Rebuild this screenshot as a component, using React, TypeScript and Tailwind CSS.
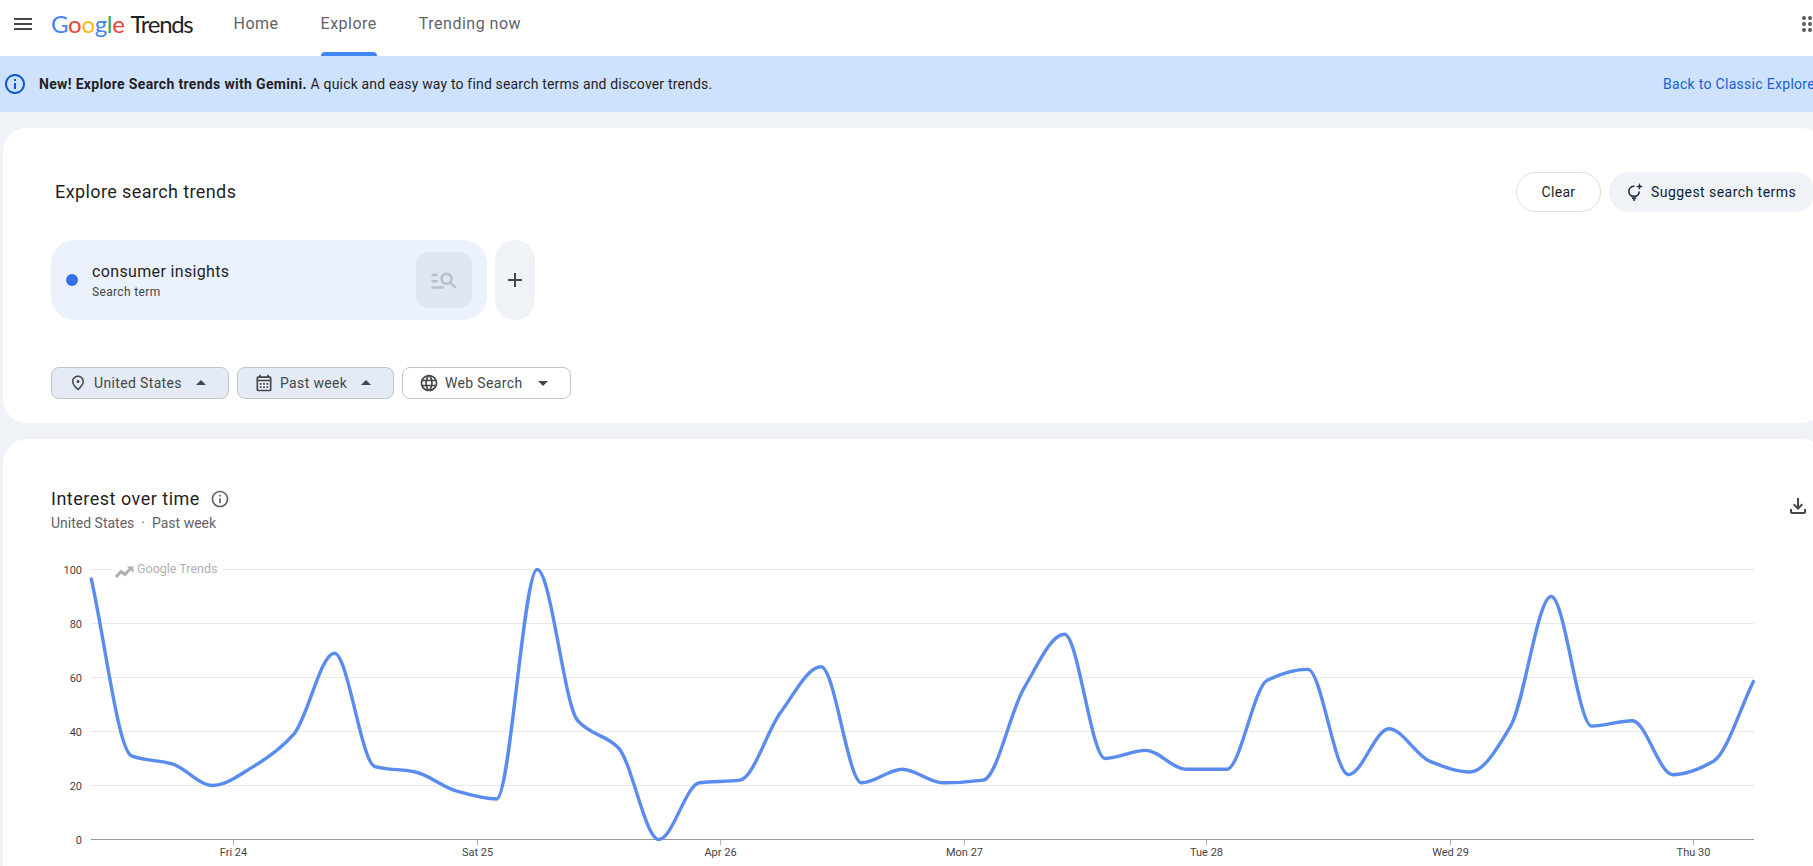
import React from 'react';
import {
  MdAdd,
  MdArrowDropDown,
  MdArrowDropUp,
  MdInfoOutline,
  MdLanguage,
  MdManageSearch,
  MdMenu,
  MdOutlineCalendarMonth,
  MdOutlineFileDownload,
  MdOutlinePlace,
} from 'react-icons/md';

// one sample every 4 hours, read off the trend line
const values = [
  97, 31, 28, 20, 27, 39, 69, 27, 25, 18, 15, 100, 44, 34, 0, 21, 22, 47, 64, 21, 26,
  21, 22, 56, 76, 30, 33, 26, 26, 59, 63, 24, 41, 29, 25, 42, 90, 42, 44, 24, 29, 59,
];

const plotLeft = 91;
const plotRight = 1754;
const yOf = (v: number) => 839.5 - v * 2.7;
const xOf = (i: number) => plotLeft + (i * (plotRight - plotLeft)) / (values.length - 1);

// monotone cubic, so the line never overshoots the samples
const buildLine = () => {
  const pts = values.map((v, i) => [xOf(i), yOf(v)]);
  const h = pts[1][0] - pts[0][0];
  const slopes = pts.slice(1).map((p, i) => (p[1] - pts[i][1]) / h);
  const tangents = pts.map((_, i) => {
    if (i === 0) return slopes[0];
    if (i === pts.length - 1) return slopes[slopes.length - 1];
    const a = slopes[i - 1];
    const b = slopes[i];
    if (a * b <= 0) return 0;
    return (2 * a * b) / (a + b);
  });
  let d = `M${pts[0][0]} ${pts[0][1]}`;
  for (let i = 0; i < pts.length - 1; i++) {
    const [x0, y0] = pts[i];
    const [x1, y1] = pts[i + 1];
    d += ` C${x0 + h / 3} ${y0 + (tangents[i] * h) / 3} ${x1 - h / 3} ${y1 - (tangents[i + 1] * h) / 3} ${x1} ${y1}`;
  }
  return d;
};

const yLabels = [100, 80, 60, 40, 20, 0];
const xLabels = [
  { label: 'Fri 24', x: 233.5 },
  { label: 'Sat 25', x: 477.5 },
  { label: 'Apr 26', x: 720.5 },
  { label: 'Mon 27', x: 964.5 },
  { label: 'Tue 28', x: 1206.5 },
  { label: 'Wed 29', x: 1450.5 },
  { label: 'Thu 30', x: 1693.5 },
];

const GoogleWord = () => (
  <span className="font-['Lato',sans-serif] text-[24px] leading-none tracking-[-0.3px]">
    <span className="text-[#4285f4]">G</span>
    <span className="text-[#ea4335]">o</span>
    <span className="text-[#fbbc05]">o</span>
    <span className="text-[#4285f4]">g</span>
    <span className="text-[#34a853]">l</span>
    <span className="text-[#ea4335]">e</span>
  </span>
);

const AppsIcon = () => (
  <svg width="24" height="24" viewBox="0 0 24 24" fill="#5a5a5a">
    {[6, 12, 18].map(cy =>
      [6, 12, 18].map(cx => <circle key={`${cx}-${cy}`} cx={cx} cy={cy} r="2" />)
    )}
  </svg>
);

const SuggestIcon = () => (
  <svg width="20" height="20" viewBox="0 0 20 20" fill="none" stroke="#1f2f3f" strokeWidth="1.6">
    <path d="M9.500 4.300A5.200 5.200 0 1 0 14.200 9.500" />
    <path d="M6.800 14.200h4.600M7 16.200h4.200M8 18h2.200" />
    <path d="M14.500 1l.9 2.600 2.600.9-2.600.9-.9 2.600-.9-2.600-2.600-.9 2.600-.9z" fill="#1f2f3f" stroke="none" />
  </svg>
);

interface FilterProps {
  icon: React.ReactNode;
  label: string;
  open?: boolean;
  width: string;
}

const Filter: React.FC<FilterProps> = ({ icon, label, open, width }) => (
  <div
    className={`flex h-8 items-center justify-between rounded-lg border border-[#c0c4c9] pl-4 pr-[15px] text-sm tracking-[0.35px] text-[#444746] ${width} ${
      open ? 'bg-[#e4ebf6]' : 'bg-white'
    }`}
  >
    <div className="flex items-center gap-[6px]">
      {icon}
      <span>{label}</span>
    </div>
    {open ? <MdArrowDropUp size={24} /> : <MdArrowDropDown size={24} />}
  </div>
);

const TrendChart = () => (
  <svg viewBox="3 550 1780 320" className="block h-[320px] w-[1780px]">
    {yLabels.map(v => (
      <g key={v}>
        <line
          x1={plotLeft}
          x2={plotRight}
          y1={yOf(v)}
          y2={yOf(v)}
          stroke={v === 0 ? '#9a9a9a' : '#e8e8e8'}
          strokeWidth="1"
        />
        <text x="82" y={yOf(v) + 4} textAnchor="end" fontSize="11" fill="#444444">
          {v}
        </text>
      </g>
    ))}
    {xLabels.map(t => (
      <g key={t.label}>
        <line x1={t.x} x2={t.x} y1="840" y2="845" stroke="#b5b5b5" strokeWidth="1" />
        <text x={t.x} y="856" textAnchor="middle" fontSize="11" fill="#444444">
          {t.label}
        </text>
      </g>
    ))}
    <rect x="111" y="560" width="112" height="20" fill="white" />
    <path d="M116 577l5-5.500 4 3 6-6.500" fill="none" stroke="#b0b0b0" strokeWidth="3" />
    <path d="M127 566.500h6.500v6.500z" fill="#b0b0b0" />
    <text x="137" y="573" fontSize="12.500" fill="#b0b0b0">
      Google Trends
    </text>
    <path d={buildLine()} fill="none" stroke="#5a8cf0" strokeWidth="3.400" strokeLinejoin="round" />
  </svg>
);

export default function App() {
  return (
    <div className="h-[866px] w-[1813px] overflow-hidden bg-[#eff3f8] font-['Roboto',sans-serif]">
      <div className="w-[1825px]">
        <header className="flex h-14 items-center bg-white">
          <div className="mb-2 flex w-[51px] justify-start pl-[11px] text-[#444746]">
            <MdMenu size={24} />
          </div>
          <div className="mb-[9px] flex items-center gap-[6px]">
            <GoogleWord />
            <span className="font-['Lato',sans-serif] text-[24px] leading-none tracking-[-1.3px] text-[#1f1f1f]">Trends</span>
          </div>
          <nav className="ml-[41px] flex h-full items-center gap-[42px] text-base tracking-[0.5px] text-[#5f6368]">
            <span className="mb-2">Home</span>
            <div className="relative flex h-full items-center">
              <span className="mb-2">Explore</span>
              <span className="absolute bottom-0 left-0 h-1 w-full rounded-t bg-[#4285f4]" />
            </div>
            <span className="mb-2">Trending now</span>
          </nav>
          <div className="mb-2 ml-auto mr-[3px] flex">
            <AppsIcon />
          </div>
        </header>

        <div className="flex h-14 items-center bg-[#cfe2fd] text-sm text-[#1f1f1f]">
          <MdInfoOutline size={24} className="ml-[3px] text-[#0b57d0]" />
          <p className="ml-[12px] tracking-[0.17px]">
            <b className="font-bold tracking-[0.33px]">New! Explore Search trends with Gemini.</b> A quick and easy way to find search terms and discover trends.
          </p>
          <a className="ml-auto w-[162px] whitespace-nowrap tracking-[0.3px] text-[#1a5fd4]">Back to Classic Explore</a>
        </div>

        <main className="flex flex-col gap-4 pl-[3px] pt-4">
          <section className="rounded-3xl bg-white pb-6 pl-12 pr-[10px] pt-11">
            <div className="flex items-center justify-between">
              <h2 className="pl-[4px] text-lg font-normal tracking-[0.4px] text-[#1f1f1f]">Explore search trends</h2>
              <div className="flex items-center gap-2">
                <button className="h-10 w-[85px] rounded-full border border-[#e0e0e0] text-sm tracking-[0.3px] text-[#1f1f1f]">
                  Clear
                </button>
                <button className="flex h-10 w-[206px] items-center gap-[6px] rounded-full bg-[#eff3f8] pl-4 text-sm tracking-[0.45px] text-[#0b1f33]">
                  <SuggestIcon />
                  Suggest search terms
                </button>
              </div>
            </div>

            <div className="mt-7 flex gap-2">
              <div className="flex h-20 w-[436px] items-center rounded-3xl bg-[#ebf1fd] pl-[15px] pr-[15px]">
                <span className="h-3 w-3 rounded-full bg-[#3271ea]" />
                <div className="ml-[14px] flex-1 pt-[1px]">
                  <p className="text-base leading-5 tracking-[0.35px] text-[#1f1f1f]">consumer insights</p>
                  <p className="mt-[2px] text-xs tracking-[0.35px] text-[#444746]">Search term</p>
                </div>
                <div className="flex h-14 w-14 items-center justify-center rounded-xl bg-[#e1e7f1] text-[#b9c0cb]">
                  <MdManageSearch size={30} />
                </div>
              </div>
              <div className="flex h-20 w-10 items-center justify-center rounded-[20px] bg-[#eff3f8] text-[#444746]">
                <MdAdd size={24} />
              </div>
            </div>

            <div className="mt-[47px] flex gap-2">
              <Filter open width="w-[178px]" label="United States" icon={<MdOutlinePlace size={18} className="mx-px" />} />
              <Filter open width="w-[157px]" label="Past week" icon={<MdOutlineCalendarMonth size={20} />} />
              <Filter width="w-[169px]" label="Web Search" icon={<MdLanguage size={20} />} />
            </div>
          </section>

          <section className="h-[500px] rounded-3xl bg-white">
            <div className="flex items-start justify-between pl-12 pr-[15px] pt-12">
              <div>
                <div className="flex items-center gap-[10px]">
                  <h2 className="text-lg font-normal leading-6 tracking-[0.5px] text-[#1f1f1f]">Interest over time</h2>
                  <MdInfoOutline size={20} className="text-[#5f6368]" />
                </div>
                <p className="mt-[2px] text-sm leading-5 text-[#5f6368]">
                  United States<span className="mx-[7px]">·</span>Past week
                </p>
              </div>
              <MdOutlineFileDownload size={24} className="mt-[7px] text-[#444746]" />
            </div>
            <div className="mt-[17px]">
              <TrendChart />
            </div>
          </section>
        </main>
      </div>
    </div>
  );
}
